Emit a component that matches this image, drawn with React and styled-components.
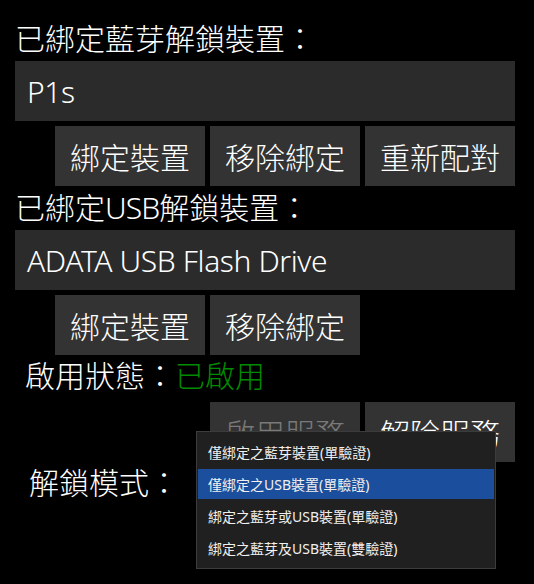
import React from 'react';
import styled, { createGlobalStyle } from 'styled-components';

const GlobalStyle = createGlobalStyle`
  html, body {
    margin: 0;
    padding: 0;
    background: #000;
  }
  body {
    font-family: "Noto Sans", "Noto Sans CJK TC", sans-serif;
    font-weight: 300;
    color: #fff;
  }
`;

const Page = styled.div`
  width: 534px;
  height: 584px;
  box-sizing: border-box;
  padding: 17px 19px 0 15px;
  display: flex;
  flex-direction: column;
  overflow: hidden;
`;

const Heading = styled.div`
  height: 44px;
  line-height: 44px;
  font-size: 30px;
  white-space: nowrap;
`;

const Latin = styled.span`
  letter-spacing: -0.9px;
`;

const TextBox = styled.div`
  height: 60px;
  background: #2b2b2b;
  display: flex;
  align-items: center;
  padding-left: 12px;
  font-size: 30px;
  letter-spacing: -0.4px;
  white-space: nowrap;
`;

const ButtonRow = styled.div`
  display: flex;
  gap: 5px;
  margin-top: 5px;
  padding-left: 40px;
  justify-content: ${p => (p.$end ? 'flex-end' : 'flex-start')};
`;

const Button = styled.div`
  width: 150px;
  height: 60px;
  background: #333;
  color: ${p => (p.$disabled ? '#7a7a7a' : '#fff')};
  display: flex;
  align-items: center;
  justify-content: center;
  font-size: 30px;
  white-space: nowrap;
`;

const StatusRow = styled.div`
  height: 42px;
  line-height: 42px;
  padding-left: 10px;
  font-size: 30px;
  white-space: nowrap;
`;

const Green = styled.span`
  color: #008c00;
`;

const ModeRow = styled.div`
  display: grid;
  grid-template-columns: 181px 300px;
  align-items: center;
  margin-top: 5px;
`;

const ModeLabel = styled.div`
  padding-left: 14px;
  font-size: 30px;
  line-height: 32px;
  white-space: nowrap;
`;

const Combo = styled.div`
  position: relative;
  height: 32px;
`;

const Popup = styled.div`
  position: absolute;
  top: -36px;
  left: 0;
  width: 300px;
  box-sizing: border-box;
  background: #202020;
  border: 1px solid #3c3c3c;
  padding: 3px 1px 5px 1px;
  z-index: 2;
`;

const Item = styled.div`
  height: 30px;
  margin-top: 2px;
  padding-left: 10px;
  display: flex;
  align-items: center;
  font-size: 14px;
  font-weight: 400;
  color: #f0f0f0;
  white-space: nowrap;
  background: ${p => (p.$selected ? '#1b4e9c' : 'transparent')};
`;

const modes = [
  '僅綁定之藍芽裝置(單驗證)',
  '僅綁定之USB裝置(單驗證)',
  '綁定之藍芽或USB裝置(單驗證)',
  '綁定之藍芽及USB裝置(雙驗證)',
];

const App = () => (
  <>
    <GlobalStyle />
    <Page>
      <Heading>已綁定藍芽解鎖裝置：</Heading>
      <TextBox>P1s</TextBox>
      <ButtonRow>
        <Button>綁定裝置</Button>
        <Button>移除綁定</Button>
        <Button>重新配對</Button>
      </ButtonRow>
      <Heading>已綁定<Latin>USB</Latin>解鎖裝置：</Heading>
      <TextBox>ADATA USB Flash Drive</TextBox>
      <ButtonRow>
        <Button>綁定裝置</Button>
        <Button>移除綁定</Button>
      </ButtonRow>
      <StatusRow>
        啟用狀態：<Green>已啟用</Green>
      </StatusRow>
      <ButtonRow $end>
        <Button $disabled>啟用服務</Button>
        <Button>解除服務</Button>
      </ButtonRow>
      <ModeRow>
        <ModeLabel>解鎖模式：</ModeLabel>
        <Combo>
          <Popup>
            {modes.map((m, i) => (
              <Item key={m} $selected={i === 1}>{m}</Item>
            ))}
          </Popup>
        </Combo>
      </ModeRow>
    </Page>
  </>
);

export default App;
